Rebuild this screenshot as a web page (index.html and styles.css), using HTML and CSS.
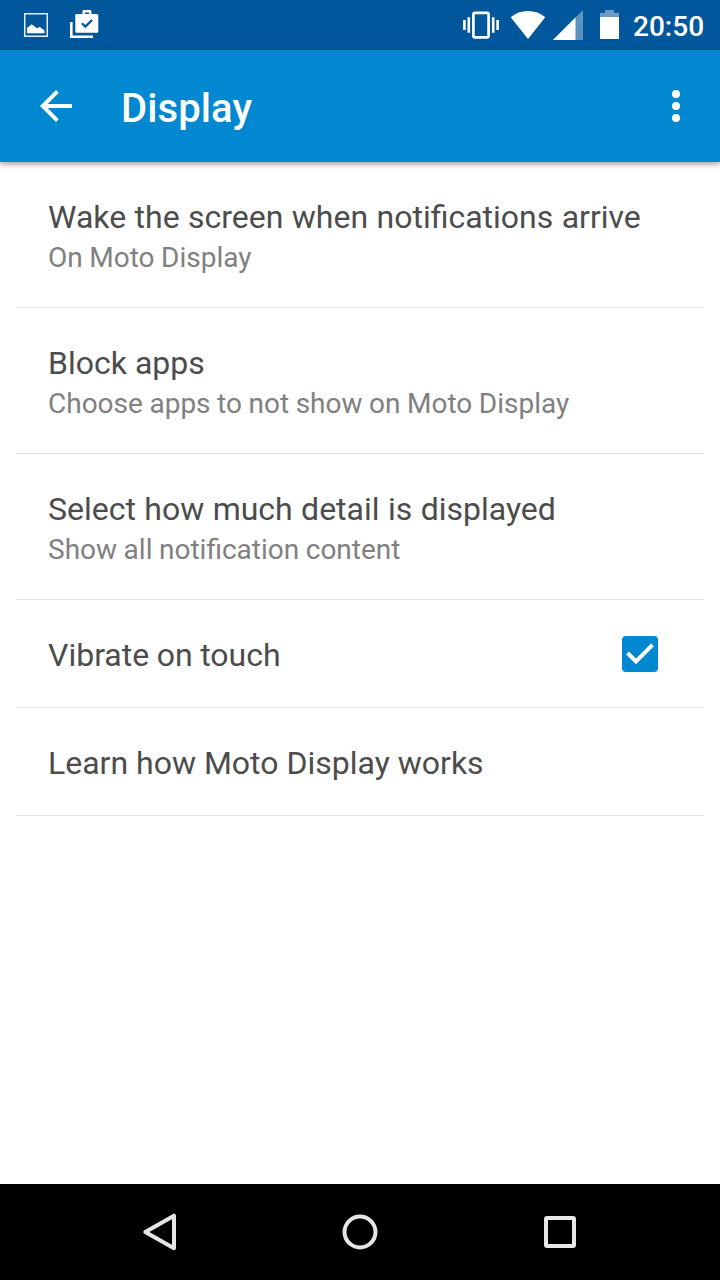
FILE: index.html
```html
<!DOCTYPE html>
<html lang="en">
<head>
    <meta charset="UTF-8">
    <meta name="viewport" content="width=device-width, initial-scale=1.0">
    <title>Display</title>
    <link rel="stylesheet" href="styles.css">
</head>
<body>
    <div class="status-bar">
        <svg class="icon-picture" width="24" height="50" viewBox="24 0 24 50">
            <rect x="24.75" y="13.75" width="22.5" height="22.5" fill="none" stroke="#e3ecf4" stroke-width="1.5"/>
            <path d="M27 33.3v-5.6l2-1.2 2.5-2.2 3 2 2.2 1.9 3-1.2 4.8 3.3v3z" fill="#fff"/>
        </svg>
        <svg class="icon-shop" width="29" height="50" viewBox="70 0 29 50">
            <path d="M71.3 22v14.7H93" fill="none" stroke="#fff" stroke-width="2.6"/>
            <path d="M83.7 15v-3.7h6.5V15" fill="none" stroke="#fff" stroke-width="2.4" stroke-linejoin="round"/>
            <rect x="75.3" y="14" width="23" height="18.8" rx="1.2" fill="#fff"/>
            <path d="M82 23.2l3.4 3.4 6.6-6.6" fill="none" stroke="#01579b" stroke-width="2.3"/>
        </svg>
        <svg class="icon-vibrate" width="36" height="50" viewBox="463 0 36 50">
            <rect x="473.4" y="12.9" width="15.2" height="24.4" rx="1.6" fill="none" stroke="#fff" stroke-width="2.7"/>
            <path d="M464.4 20v10M468.8 17.3v15.4M493.2 17.3v15.4M497.6 20v10" stroke="#fff" stroke-width="2.6"/>
        </svg>
        <svg class="icon-wifi" width="36" height="50" viewBox="510 0 36 50">
            <path d="M510.7 17.2Q518.5 11 528 11t17.3 6.2L528 39z" fill="#fff"/>
        </svg>
        <svg class="icon-signal" width="30" height="50" viewBox="553 0 30 50">
            <path d="M583 10v30h-30z" fill="#5c93be"/>
            <path d="M575.5 17.5V40H553z" fill="#fff"/>
        </svg>
        <svg class="icon-battery" width="19" height="50" viewBox="600 0 19 50">
            <path d="M600 17v-4.2h5V10h9v2.8h5V17z" fill="#6b9ac3"/>
            <path d="M600 17h19v22h-19z" fill="#fff"/>
        </svg>
        <span class="clock">20:50</span>
    </div>

    <header class="app-bar">
        <svg class="icon-back" width="32" height="32" viewBox="4 4 16 16">
            <path d="M20 11H7.83l5.59-5.59L12 4l-8 8 8 8 1.41-1.41L7.83 13H20v-2z" fill="#fff"/>
        </svg>
        <h1>Display</h1>
        <svg class="icon-more" width="8" height="32" viewBox="0 0 8 32">
            <circle cx="4" cy="4" r="4" fill="#fff"/>
            <circle cx="4" cy="16" r="4" fill="#fff"/>
            <circle cx="4" cy="28" r="4" fill="#fff"/>
        </svg>
    </header>

    <main class="settings">
        <div class="setting">
            <div class="setting-title long">Wake the screen when notifications arrive</div>
            <div class="setting-summary">On Moto Display</div>
        </div>
        <div class="setting">
            <div class="setting-title">Block apps</div>
            <div class="setting-summary">Choose apps to not show on Moto Display</div>
        </div>
        <div class="setting">
            <div class="setting-title long">Select how much detail is displayed</div>
            <div class="setting-summary">Show all notification content</div>
        </div>
        <div class="setting setting-toggle">
            <div class="setting-title">Vibrate on touch</div>
            <svg class="checkbox" width="36" height="36" viewBox="0 0 36 36">
                <rect width="36" height="36" rx="4" fill="#0288d1"/>
                <path d="M5.5 17l8.5 8.4L30.5 8.8" fill="none" stroke="#fff" stroke-width="4"/>
            </svg>
        </div>
        <div class="setting">
            <div class="setting-title">Learn how Moto Display works</div>
        </div>
    </main>

    <nav class="nav-bar">
        <svg width="40" height="40" viewBox="0 0 40 40">
            <path d="M34 3.7v32.6L5.3 20z" fill="none" stroke="#e6e6e6" stroke-width="4" stroke-linejoin="round"/>
        </svg>
        <svg width="40" height="40" viewBox="0 0 40 40">
            <circle cx="20" cy="20" r="15.5" fill="none" stroke="#e6e6e6" stroke-width="4"/>
        </svg>
        <svg width="40" height="40" viewBox="0 0 40 40">
            <rect x="6" y="6" width="28" height="28" rx="1" fill="none" stroke="#e6e6e6" stroke-width="4"/>
        </svg>
    </nav>
</body>
</html>
```

FILE: styles.css
```css
* {
    margin: 0;
    padding: 0;
    box-sizing: border-box;
}
body {
    display: flex;
    flex-direction: column;
    height: 100vh;
    background: #fff;
    font-family: Roboto, sans-serif;
    overflow: hidden;
}
svg {
    display: block;
    flex: none;
}
.status-bar {
    display: flex;
    align-items: center;
    height: 50px;
    padding: 0 16px 0 24px;
    background: #01579b;
    color: #fff;
}
.icon-shop {
    margin-left: 22px;
}
.icon-vibrate {
    margin-left: auto;
}
.icon-wifi {
    margin-left: 11px;
}
.icon-signal {
    margin-left: 7px;
}
.icon-battery {
    margin-left: 17px;
}
.clock {
    width: 71px;
    margin-left: 14px;
    font-size: 28px;
    font-weight: 500;
    line-height: 46px;
    padding-top: 4px;
}
.app-bar {
    display: flex;
    align-items: center;
    height: 112px;
    padding: 0 40px;
    background: #0288d1;
    color: #fff;
    box-shadow: 0 2px 6px rgba(0, 0, 0, 0.4);
}
.app-bar h1 {
    margin-left: 49px;
    padding-top: 4px;
    font-size: 40px;
    font-weight: 500;
    letter-spacing: 0.1px;
}
.icon-more {
    margin-left: auto;
}
.settings {
    flex: 1;
    padding: 0 16px;
}
.setting {
    padding: 35px 32px 32px;
    border-bottom: 1px solid #e0e0e0;
}
.setting-title {
    font-size: 32px;
    line-height: 40px;
    color: #4c4c4c;
}
.setting-title.long {
    word-spacing: 0.45px;
}
.setting-summary {
    margin-bottom: -4px;
    font-size: 28px;
    line-height: 42px;
    word-spacing: -0.4px;
    color: #808080;
}
.setting-toggle {
    display: flex;
    align-items: center;
    justify-content: space-between;
    word-spacing: -0.4px;
}
.checkbox {
    margin: 0 14px 2px 0;
}
.nav-bar {
    display: flex;
    align-items: center;
    justify-content: center;
    gap: 160px;
    height: 96px;
    background: #000;
}
```
